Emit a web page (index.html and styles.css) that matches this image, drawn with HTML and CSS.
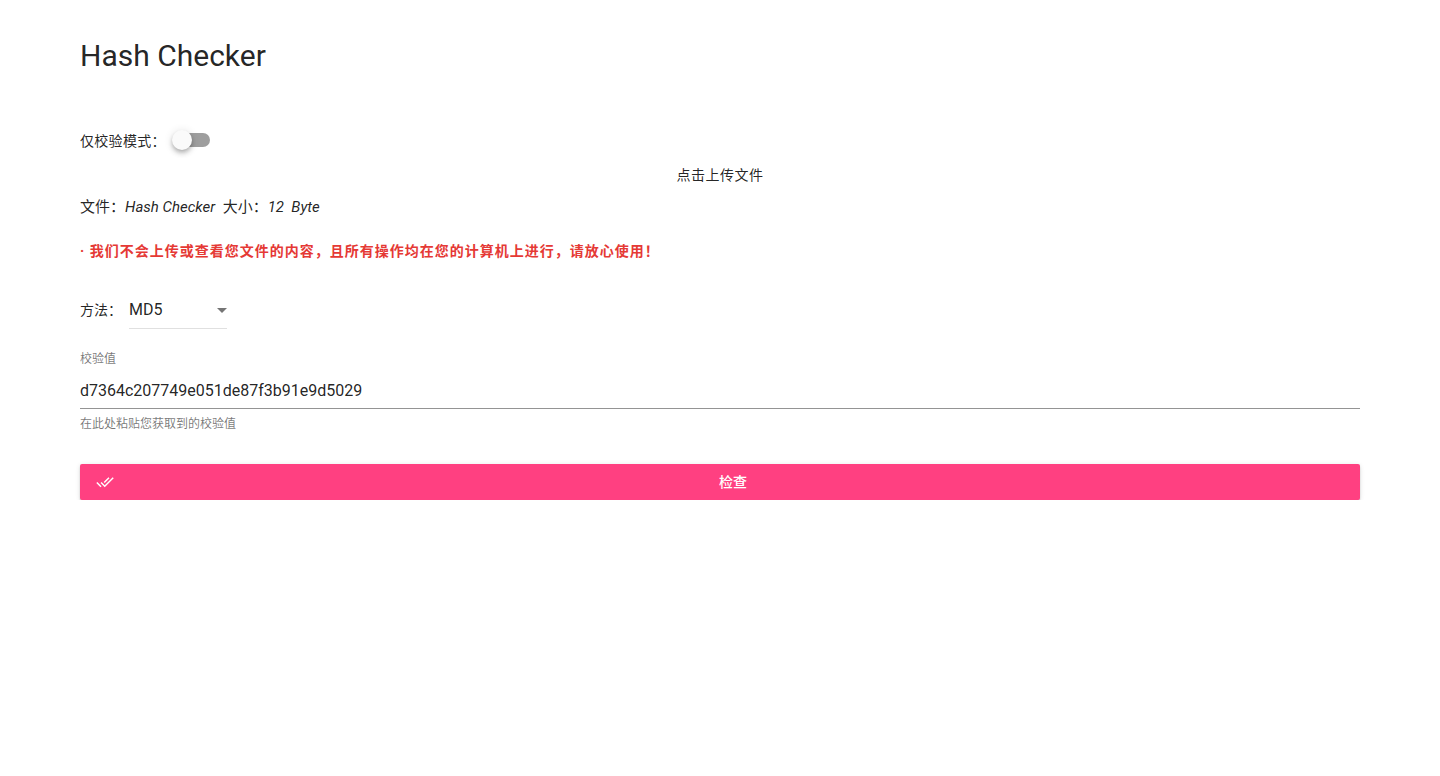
FILE: index.html
```html
<!DOCTYPE html>
<html lang="zh">
<head>
<meta charset="utf-8">
<title>Hash Checker</title>
<link rel="stylesheet" href="styles.css">
</head>
<body>
<div class="page">
  <h1 class="title">Hash Checker</h1>

  <div class="switch-row">
    <span class="switch-label">仅校验模式：</span>
    <span class="switch">
      <span class="track"></span>
      <span class="thumb"></span>
    </span>
  </div>

  <div class="upload">点击上传文件</div>

  <div class="file-info">文件：<i>Hash Checker</i>&nbsp; 大小：<i>12&nbsp; Byte</i></div>

  <div class="warning">· 我们不会上传或查看您文件的内容，且所有操作均在您的计算机上进行，请放心使用！</div>

  <div class="method-row">
    <span class="method-label">方法：</span>
    <div class="select">
      <span class="select-value">MD5</span>
      <svg class="arrow" width="24" height="24" viewBox="0 0 24 24"><path d="M7 10l5 5 5-5z" fill="rgba(0,0,0,0.54)"/></svg>
    </div>
  </div>

  <div class="field">
    <div class="field-label">校验值</div>
    <div class="field-input">d7364c207749e051de87f3b91e9d5029</div>
    <div class="field-hint">在此处粘贴您获取到的校验值</div>
  </div>

  <button class="check-btn">
    <svg class="btn-icon" width="24" height="24" viewBox="0 0 24 24"><path fill="#fff" d="M18 7l-1.41-1.41-6.34 6.34 1.41 1.41L18 7zm4.24-1.41L11.66 16.17 7.48 12l-1.41 1.41L11.66 19l12-12-1.42-1.41zM.41 13.41L6 19l1.41-1.41L1.83 12 .41 13.41z"/></svg>
    <span class="btn-text">检查</span>
  </button>
</div>
</body>
</html>
```

FILE: styles.css
```css
* { box-sizing: border-box; }
html, body { margin: 0; padding: 0; background: #fff; }
body {
  font-family: Roboto, "Noto Sans CJK SC", sans-serif;
  color: rgba(0,0,0,0.87);
  font-size: 14px;
}
.page {
  padding: 36px 80px 0 80px;
}
.title {
  margin: 0;
  font-weight: 400;
  font-size: 30px;
  line-height: 40px;
  letter-spacing: 0;
  color: rgba(0,0,0,0.87);
}
.switch-row {
  display: flex;
  align-items: center;
  margin-top: 52px;
  height: 24px;
}
.switch-label { font-size: 14px; letter-spacing: 0.3px; }
.switch {
  position: relative;
  width: 40px;
  height: 24px;
  margin-left: 4px;
}
.track {
  position: absolute;
  left: 6px;
  top: 5px;
  width: 34px;
  height: 14px;
  border-radius: 8px;
  background: rgba(0,0,0,0.38);
}
.thumb {
  position: absolute;
  left: 2px;
  top: 2px;
  width: 20px;
  height: 20px;
  border-radius: 50%;
  background: #fafafa;
  box-shadow: 0 2px 4px -1px rgba(0,0,0,.2), 0 4px 5px 0 rgba(0,0,0,.14), 0 1px 10px 0 rgba(0,0,0,.12);
}
.upload {
  text-align: center;
  font-size: 14px;
  letter-spacing: 0.5px;
  line-height: 20px;
  margin-top: 13px;
}
.file-info {
  margin-top: 12px;
  font-size: 15px;
  line-height: 20px;
}
.file-info i { font-style: italic; }
.warning {
  margin-top: 24px;
  color: #e53935;
  font-weight: 700;
  font-size: 14px;
  letter-spacing: 1px;
  line-height: 20px;
}
.method-row {
  display: flex;
  align-items: flex-start;
  margin-top: 39px;
}
.method-label {
  line-height: 20px;
  font-size: 14px;
}
.select {
  display: flex;
  align-items: center;
  justify-content: space-between;
  width: 98px;
  height: 29px;
  margin-left: 7px;
  border-bottom: 1px solid rgba(0,0,0,0.12);
  padding-bottom: 9px;
}
.select-value {
  font-size: 16px;
  line-height: 20px;
}
.arrow { margin-right: -7px; }
.field { margin-top: 22px; }
.field-label {
  font-size: 12px;
  line-height: 16px;
  color: rgba(0,0,0,0.54);
}
.field-input {
  margin-top: 14px;
  font-size: 16px;
  line-height: 20px;
  padding-bottom: 7px;
  border-bottom: 1px solid rgba(0,0,0,0.42);
}
.field-hint {
  margin-top: 7px;
  font-size: 12px;
  line-height: 16px;
  color: rgba(0,0,0,0.54);
}
.check-btn {
  display: flex;
  align-items: center;
  width: 100%;
  height: 36px;
  margin-top: 32px;
  border: none;
  border-radius: 2px;
  background: #ff4081;
  color: #fff;
  font-family: Roboto, "Noto Sans CJK SC", sans-serif;
  font-size: 14px;
  font-weight: 500;
  padding: 0 16px;
  box-shadow: 0 3px 1px -2px rgba(0,0,0,.2), 0 2px 2px 0 rgba(0,0,0,.14), 0 1px 5px 0 rgba(0,0,0,.12);
  cursor: pointer;
}
.btn-icon { flex: none; width: 18px; height: 18px; }
.btn-text { flex: 1; text-align: center; margin-left: 8px; padding-bottom: 3px; }
```
